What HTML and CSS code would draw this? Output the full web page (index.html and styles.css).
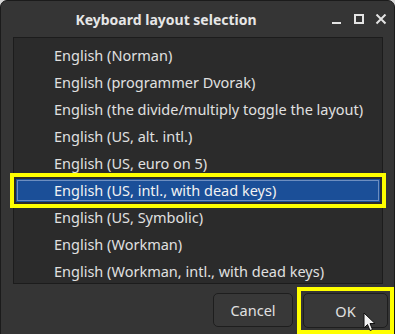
FILE: index.html
```html
<!DOCTYPE html>
<html lang="en">
<head>
  <meta charset="UTF-8">
  <title>Keyboard layout selection</title>
  <link rel="stylesheet" href="styles.css">
</head>
<body>

<div class="window">
  <div class="titlebar">
    <div class="title">Keyboard layout selection</div>
    <div class="controls">
      <svg class="ctl" width="12" height="12" viewBox="0 0 12 12"><rect x="1" y="8" width="9" height="2" fill="#e4e4e4"/></svg>
      <svg class="ctl" width="12" height="12" viewBox="0 0 12 12"><rect x="2" y="1" width="8" height="8" fill="none" stroke="#e4e4e4" stroke-width="2"/></svg>
      <svg class="ctl" width="12" height="12" viewBox="0 0 12 12"><path d="M1.5 0.5 L10.5 9.5 M10.5 0.5 L1.5 9.5" stroke="#e4e4e4" stroke-width="2"/></svg>
    </div>
  </div>

  <div class="list">
    <div class="row">English (Norman)</div>
    <div class="row">English (programmer Dvorak)</div>
    <div class="row">English (the divide/multiply toggle the layout)</div>
    <div class="row">English (US, alt. intl.)</div>
    <div class="row">English (US, euro on 5)</div>
    <div class="row selected">English (US, intl., with dead keys)</div>
    <div class="row">English (US, Symbolic)</div>
    <div class="row">English (Workman)</div>
    <div class="row">English (Workman, intl., with dead keys)</div>
  </div>

  <div class="buttons">
    <button class="button">Cancel</button>
    <div class="mark">
      <button class="button ok">OK</button>
    </div>
  </div>

  <svg class="cursor" width="14" height="22" viewBox="0 0 14 22">
    <path d="M1 1 L1 16 L4.5 12.5 L7 18.5 L9.5 17.5 L7 11.5 L12 11.5 Z" fill="#f4f4f4" stroke="#111" stroke-width="1"/>
  </svg>
</div>

</body>
</html>
```

FILE: styles.css
```css
body {
  margin: 0;
  padding: 0;
  background-color: #d8d8d8;
  font-family: "Noto Sans", sans-serif;
}
.window {
  position: relative;
  width: 393px;
  height: 333px;
  background-color: #353535;
  border: 1px solid #1b1b1b;
  border-radius: 7px 7px 0 0;
  color: #e2e2e2;
  overflow: hidden;
}
.titlebar {
  height: 36px;
  display: flex;
  align-items: center;
}
.title {
  width: 330px;
  text-align: center;
  font-weight: bold;
  font-size: 14px;
  color: #e6e6e6;
}
.controls {
  display: flex;
  gap: 10px;
  padding-top: 2px;
}
.list {
  margin: 0 11px 0 12px;
  height: 247px;
  background-color: #2b2b2b;
  border: 1px solid #1c1c1c;
  padding: 6px 2px 0 2px;
  box-sizing: border-box;
  display: flex;
  flex-direction: column;
  gap: 4px;
}
.row {
  flex: none;
  height: 23px;
  line-height: 23px;
  padding-left: 38px;
  font-size: 14.5px;
  color: #e0e0e0;
  white-space: nowrap;
}
.row.selected {
  background-color: #1b4f98;
  color: #f2f2f2;
  outline: 4px solid #ffff00;
  outline-offset: 2px;
  box-shadow: inset 0 0 0 1px #1b4f98, inset 0 0 0 2px #6d8ec0;
}
.buttons {
  display: flex;
  justify-content: flex-end;
  align-items: flex-start;
  gap: 4px;
  padding: 3px 0 0 0;
}
.button {
  font-family: "Noto Sans", sans-serif;
  font-size: 14.5px;
  color: #e0e0e0;
  background-color: #383838;
  border: 1px solid #1e1e1e;
  border-radius: 5px;
  height: 34px;
  width: 80px;
  margin-top: 6px;
  cursor: pointer;
}
.mark {
  border: 4px solid #ffff00;
  padding: 2px;
}
.button.ok {
  width: 85px;
  height: 35px;
  margin-top: 0;
  display: block;
}
.cursor {
  position: absolute;
  left: 362px;
  top: 311px;
}
```
